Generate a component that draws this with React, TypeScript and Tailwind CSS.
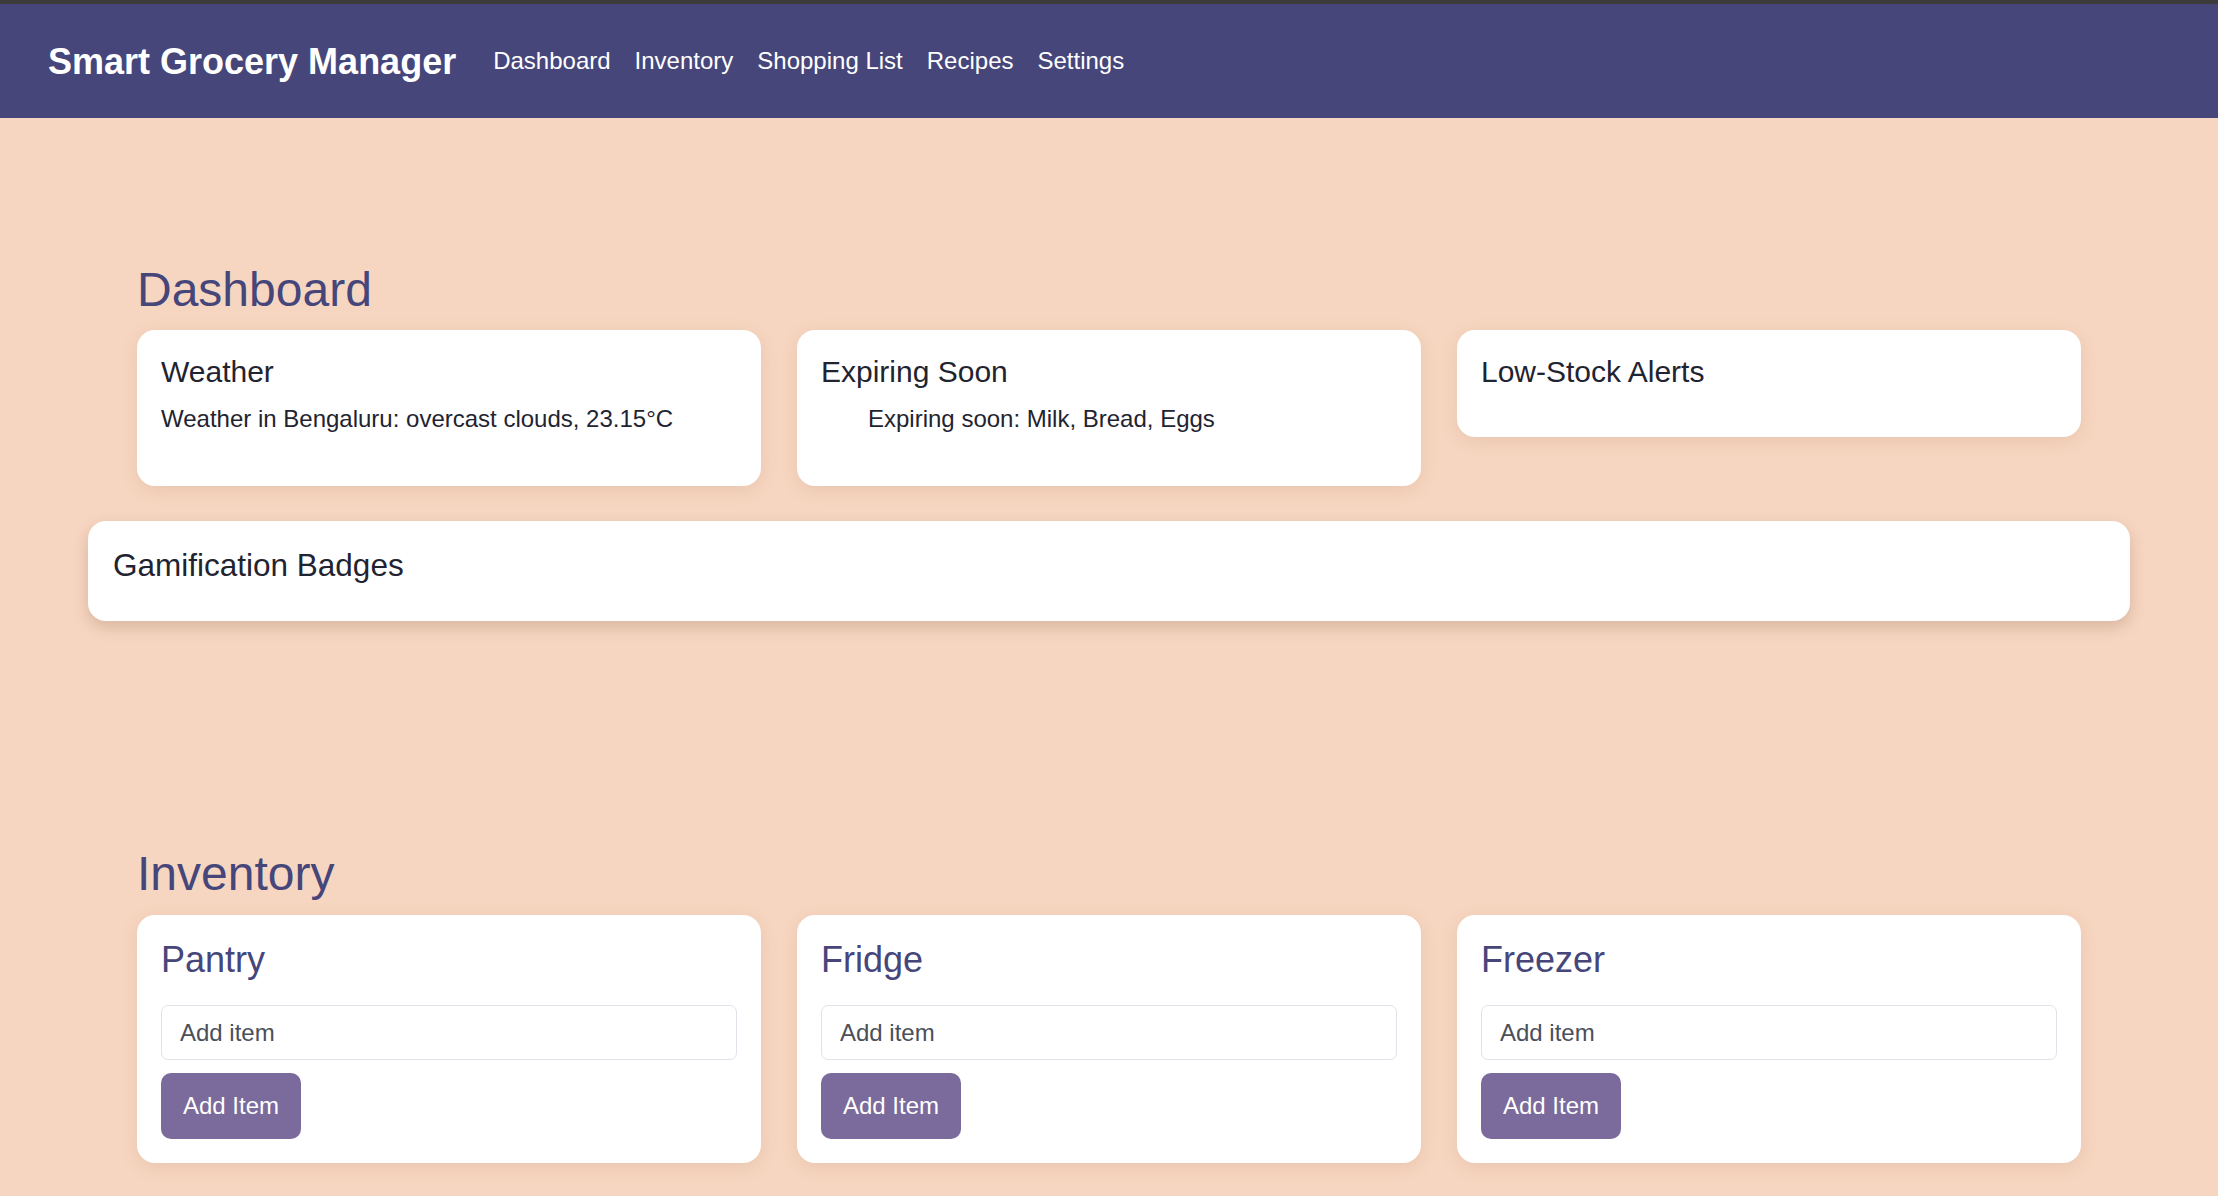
import React from "react";

const font = { fontFamily: '"Liberation Sans", Arial, sans-serif' };

function DashCard({ title, children }: { title: string; children?: React.ReactNode }) {
  return (
    <div className="bg-white rounded-[18px] px-6 pt-6 pb-6 shadow-[0_4px_18px_rgba(120,70,40,0.12)]">
      <h3 className="text-[30px] leading-[35px] text-[#1f2430]">{title}</h3>
      {children}
    </div>
  );
}

function InvCard({ title }: { title: string }) {
  return (
    <div className="bg-white rounded-[18px] px-6 pt-6 pb-6 shadow-[0_4px_18px_rgba(120,70,40,0.12)] flex flex-col items-start">
      <h3 className="text-[36px] leading-[41px] text-[#46467a]">{title}</h3>
      <input
        placeholder="Add item"
        className="mt-[25px] w-full h-[55px] rounded-[7px] border-[1.5px] border-[#e2e2ea] px-[18px] text-[24px] text-[#333] placeholder:text-[#4a4f5a] outline-none"
        style={font}
      />
      <button
        className="mt-[13px] h-[66px] w-[140px] rounded-[10px] bg-[#7a6b9c] text-white text-[24px]"
        style={font}
      >
        Add Item
      </button>
    </div>
  );
}

export default function App() {
  return (
    <div className="min-h-[1196px] bg-[#f7d6c1]" style={font}>
      <div className="h-[4px] bg-[#3c3c3c]" />
      <header className="h-[114px] bg-[#46467a] flex items-center px-[48px] text-white">
        <h1 className="text-[36px] font-bold leading-[41px] mr-[37px]">Smart Grocery Manager</h1>
        <nav className="flex gap-[24px] text-[24px]">
          <a>Dashboard</a>
          <a>Inventory</a>
          <a>Shopping List</a>
          <a>Recipes</a>
          <a>Settings</a>
        </nav>
      </header>

      <main className="px-[88px]">
        <section className="px-[49px] pt-[144px]">
          <h2 className="text-[48px] leading-[55px] text-[#46467a]">Dashboard</h2>
          <div className="mt-[13px] grid grid-cols-3 gap-[36px] items-start">
            <DashCard title="Weather">
              <p className="mt-[16px] mb-[29px] text-[24px] leading-[28px] text-[#1f2430]">
                Weather in Bengaluru: overcast clouds, 23.15°C
              </p>
            </DashCard>
            <DashCard title="Expiring Soon">
              <ul className="mt-[16px] mb-[29px] pl-[47px] text-[24px] leading-[28px] text-[#1f2430]">
                <li>Expiring soon: Milk, Bread, Eggs</li>
              </ul>
            </DashCard>
            <DashCard title="Low-Stock Alerts">
              <div className="h-[24px]" />
            </DashCard>
          </div>
        </section>
        <div className="mt-[35px] bg-white rounded-[18px] px-[25px] pt-[26px] pb-[38px] shadow-[0_6px_16px_rgba(90,50,30,0.2)]">
          <h3 className="text-[31.5px] leading-[36px] text-[#1f2430]">Gamification Badges</h3>
        </div>
        <section className="px-[49px] pt-[225px]">
          <h2 className="text-[48px] leading-[55px] text-[#46467a]">Inventory</h2>
          <div className="mt-[14px] grid grid-cols-3 gap-[36px] items-start">
            <InvCard title="Pantry" />
            <InvCard title="Fridge" />
            <InvCard title="Freezer" />
          </div>
        </section>
      </main>
    </div>
  );
}
